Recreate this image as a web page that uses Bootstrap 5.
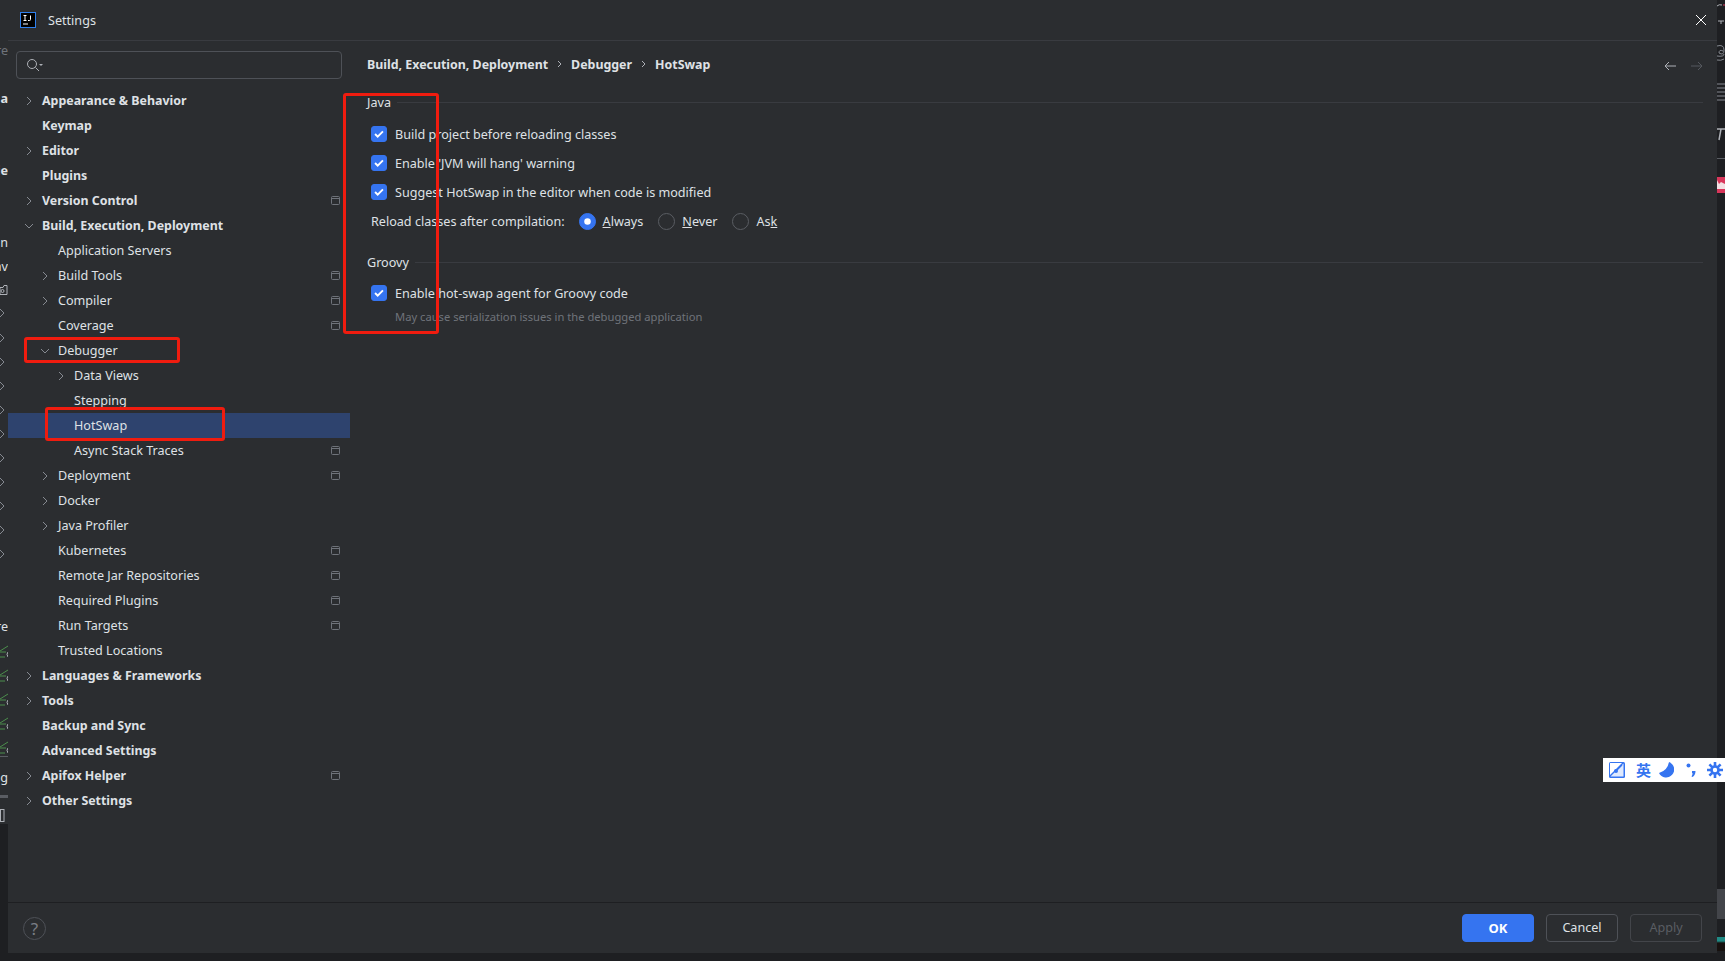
<!DOCTYPE html>
<html lang="en">
<head>
  <meta charset="UTF-8">
  <title>Settings</title>
  <link href="https://cdn.jsdelivr.net/npm/bootstrap@5.3.0/dist/css/bootstrap.min.css" rel="stylesheet">
  <style>
    html, body { height: 100%; }
    body {
      background: #1e1f22;
      color: #dfe1e5;
      font-family: "Noto Sans", "Noto Sans CJK SC", sans-serif;
      font-size: 12.6px;
      line-height: 21px;
      overflow: hidden;
    }
    .page { height: 961px; position: relative; }
    /* window behind the dialog, only its edges show */
    .edge { width: 8px; height: 961px; position: relative; overflow: hidden; flex: none; }
    .edge-left { background: linear-gradient(#2b2d30 0, #2b2d30 824px, #1e1f22 824px); }
    .edge-right { background: #1e1f22; }
    .frag { position: absolute; white-space: nowrap; line-height: 16px; }
    .frag-left { right: 0; }
    .frag-bold { font-weight: 700; }
    .frag-dim { color: #6f737a; }
    .chev-frag { position: absolute; left: 0; }
    .bar-grey { position: absolute; background: #5a5d63; }
    .bar-dark { position: absolute; left: 0; top: 889px; width: 8px; height: 30px; background: #43454a; }
    .bar-teal { position: absolute; left: 0; top: 937px; width: 8px; height: 14px; background: linear-gradient(#1f8a85 0, #1f8a85 4px, #17110f 6px); }

    .dialog { flex: 1 1 auto; height: 953px; background: #2b2d30; min-width: 0; }
    .dlg-head { height: 41px; border-bottom: 1px solid #393b40; padding: 0 10px 0 12px; flex: none; }
    .dlg-logo { width: 16px; height: 16px; margin-right: 12px; }
    .dlg-body { height: 861px; flex: none; }

    .side { width: 342px; flex: none; }
    .search-box { width: 326px; height: 28px; margin: 10px 0 9px 8px; border: 1px solid #4e5157; border-radius: 4px; padding-left: 9px; }
    .tree-row { height: 25px; padding-right: 10px; white-space: nowrap; }
    .tree-lvl0 { padding-left: 16px; }
    .tree-lvl1 { padding-left: 32px; }
    .tree-lvl2 { padding-left: 48px; }
    .tree-bold { font-weight: 700; font-size: 12.4px; }
    .tree-on { background: #2e436e; }
    .tree-arrow { width: 18px; flex: none; padding-left: 2px; display: flex; align-items: center; }
    .tree-open { margin-left: -2px; }
    .tree-pin { margin-left: auto; }

    .pane { padding: 13px 14px 0 17px; }
    .crumbs { height: 20px; font-weight: 700; font-size: 12.4px; }
    .crumb-sep { margin: 0 9px; }
    .nav-arrows { gap: 13px; margin-top: 4px; }
    .sect-title { margin-top: 18px; height: 20px; gap: 6px; }
    .sect-title.sect-next { margin-top: 21px; }
    .sect-line { height: 1px; background: #393b40; }
    .opts { margin-top: 12px; margin-left: 4px; gap: 9px; }
    .opts.opts-near { margin-top: 11px; }
    .opt-row { height: 20px; }
    .opt-box.form-check-input {
      width: 16px; height: 16px; margin: 0; flex: none;
      background-color: #3574f0; border-color: #3574f0; border-radius: 3px;
      background-image: url("data:image/svg+xml,%3csvg xmlns='http://www.w3.org/2000/svg' viewBox='0 0 16 16'%3e%3cpath fill='none' stroke='%23fff' stroke-width='2.200' d='M3.500 8l3 3 6-6'/%3e%3c/svg%3e");
    }
    .opt-radio.form-check-input {
      width: 17px; height: 17px; margin: 0; flex: none;
      background-color: transparent; border: 1px solid #5a5d63;
    }
    .opt-radio.form-check-input:checked {
      background-color: #3574f0; border-color: #3574f0;
      background-size: 13px; background-position: center; background-repeat: no-repeat;
    }
    .reload-label { margin-right: 14px; }
    .radio-item { gap: 7px; margin-right: 15px; }
    .note { margin: 3px 0 0 28px; color: #6f737a; font-size: 11.2px; }

    .dlg-foot { height: 51px; border-top: 1px solid #1e1f22; padding: 11px 15px 0 15px; flex: none; }
    .help-dot { width: 23px; height: 23px; border: 1px solid #4e5157; border-radius: 50%; color: #7a7e85; font-size: 17px; margin-top: 3px; }
    .foot-btns { gap: 12px; }
    .btn.foot-btn {
      width: 72px; height: 28px; padding: 0; font-size: 12.6px; line-height: 26px;
      border-radius: 4px; background: transparent; border: 1px solid #4e5157; color: #dfe1e5;
    }
    .btn.foot-ok { background: #3574f0; border-color: #3574f0; color: #fff; font-weight: 700; font-size: 13px; }
    .btn.foot-off { border-color: #43454a; color: #5a5d63; opacity: 1; }

    /* red annotations drawn over the screenshot */
    .mark-box { position: absolute; border: 3px solid #f01c0f; border-radius: 3px; pointer-events: none; }
    .mark-java { left: 343px; top: 93px; width: 96px; height: 241px; }
    .mark-debugger { left: 24px; top: 337px; width: 156px; height: 26px; }
    .mark-hotswap { left: 45px; top: 407px; width: 180px; height: 34px; }

    /* input method toolbar floating on top */
    .ime-bar { position: absolute; left: 1603px; top: 758px; width: 122px; height: 24px; background: #fff; color: #3574f0; padding-left: 6px; }
    .ime-word { font-family: "Noto Sans CJK SC", sans-serif; font-size: 15px; font-weight: 700; line-height: 24px; margin: 0 8px 0 11px; }
    .ime-dots { margin: 0 11px 0 12px; }
  </style>
</head>
<body>
  <div class="page d-flex">
    <!-- left edge of the IDE behind -->
    <div class="edge edge-left">
      <span class="frag frag-left frag-dim" style="top:43px">re</span>
      <span class="frag frag-left frag-bold" style="top:91px">a</span>
      <span class="frag frag-left frag-bold" style="top:163px">ie</span>
      <span class="frag frag-left" style="top:235px">n</span>
      <span class="frag frag-left" style="top:259px">av</span>
      <svg class="chev-frag" style="top:284px" width="8" height="12" viewBox="0 0 8 12" fill="none" stroke="#aeb1b7"><path d="M0 3.500h3l1-2h3v9h-7z"/><circle cx="2.500" cy="7" r="1.500"/></svg>
      <svg class="chev-frag" style="top:308px" width="5" height="10" viewBox="0 0 5 10" fill="none" stroke="#868a91"><path d="M0 1l4 4-4 4"/></svg>
      <svg class="chev-frag" style="top:333px" width="5" height="10" viewBox="0 0 5 10" fill="none" stroke="#868a91"><path d="M0 1l4 4-4 4"/></svg>
      <svg class="chev-frag" style="top:357px" width="5" height="10" viewBox="0 0 5 10" fill="none" stroke="#868a91"><path d="M0 1l4 4-4 4"/></svg>
      <svg class="chev-frag" style="top:381px" width="5" height="10" viewBox="0 0 5 10" fill="none" stroke="#868a91"><path d="M0 1l4 4-4 4"/></svg>
      <svg class="chev-frag" style="top:405px" width="5" height="10" viewBox="0 0 5 10" fill="none" stroke="#868a91"><path d="M0 1l4 4-4 4"/></svg>
      <svg class="chev-frag" style="top:429px" width="5" height="10" viewBox="0 0 5 10" fill="none" stroke="#868a91"><path d="M0 1l4 4-4 4"/></svg>
      <svg class="chev-frag" style="top:453px" width="5" height="10" viewBox="0 0 5 10" fill="none" stroke="#868a91"><path d="M0 1l4 4-4 4"/></svg>
      <svg class="chev-frag" style="top:477px" width="5" height="10" viewBox="0 0 5 10" fill="none" stroke="#868a91"><path d="M0 1l4 4-4 4"/></svg>
      <svg class="chev-frag" style="top:501px" width="5" height="10" viewBox="0 0 5 10" fill="none" stroke="#868a91"><path d="M0 1l4 4-4 4"/></svg>
      <svg class="chev-frag" style="top:525px" width="5" height="10" viewBox="0 0 5 10" fill="none" stroke="#868a91"><path d="M0 1l4 4-4 4"/></svg>
      <svg class="chev-frag" style="top:549px" width="5" height="10" viewBox="0 0 5 10" fill="none" stroke="#868a91"><path d="M0 1l4 4-4 4"/></svg>
      <span class="frag frag-left" style="top:619px">re</span>
      <svg class="chev-frag" style="top:645px" width="8" height="14" viewBox="0 0 8 14" fill="none" stroke="#4c8f4c"><path d="M0 6L8 1M0 7h6M0 12h5"/><path d="M8 7q-2 2 0 5" stroke="#aeb1b7"/></svg>
      <svg class="chev-frag" style="top:669px" width="8" height="14" viewBox="0 0 8 14" fill="none" stroke="#4c8f4c"><path d="M0 6L8 1M0 7h6M0 12h5"/><path d="M8 7q-2 2 0 5" stroke="#aeb1b7"/></svg>
      <svg class="chev-frag" style="top:693px" width="8" height="14" viewBox="0 0 8 14" fill="none" stroke="#4c8f4c"><path d="M0 6L8 1M0 7h6M0 12h5"/><path d="M8 7q-2 2 0 5" stroke="#aeb1b7"/></svg>
      <svg class="chev-frag" style="top:717px" width="8" height="14" viewBox="0 0 8 14" fill="none" stroke="#4c8f4c"><path d="M0 6L8 1M0 7h6M0 12h5"/><path d="M8 7q-2 2 0 5" stroke="#aeb1b7"/></svg>
      <svg class="chev-frag" style="top:741px" width="8" height="14" viewBox="0 0 8 14" fill="none" stroke="#4c8f4c"><path d="M0 6L8 1M0 7h6M0 12h5"/><path d="M8 7q-2 2 0 5" stroke="#aeb1b7"/></svg>
      <div class="bar-grey" style="left:0;top:756px;width:8px;height:1px"></div>
      <span class="frag frag-left" style="top:770px">ng</span>
      <div class="bar-grey" style="left:0;top:795px;width:8px;height:3px"></div>
      <svg class="chev-frag" style="top:809px" width="5" height="13" viewBox="0 0 5 13" fill="none" stroke="#aeb1b7"><rect x="0.500" y="0.500" width="3.500" height="12"/></svg>
    </div>

    <div class="dialog d-flex flex-column">
      <header class="dlg-head d-flex align-items-center">
        <svg class="dlg-logo" viewBox="0 0 16 16">
          <rect x="0.500" y="0.500" width="15" height="15" fill="#000" stroke="#2f80ed"/>
          <path d="M3.500 3.500h3M5 3.500v5M3.500 8.500h3M8 8.500h1.500q1 0 1-1V3.500" fill="none" stroke="#fff"/>
          <path d="M3 12h5" stroke="#fff"/>
        </svg>
        <span>Settings</span>
        <svg class="ms-auto" width="12" height="12" viewBox="0 0 12 12" stroke="#fff" fill="none"><path d="M1 1l10 10M11 1L1 11"/></svg>
      </header>

      <div class="dlg-body d-flex">
        <nav class="side">
          <div class="search-box d-flex align-items-center">
            <svg width="18" height="14" viewBox="0 0 18 14" fill="none" stroke="#aeb1b7"><circle cx="6" cy="6" r="4.500"/><path d="M9.500 9.500l3.500 3.500"/><path d="M13 6h4l-2 2z" fill="#aeb1b7" stroke="none"/></svg>
          </div>

          <div class="tree-row tree-lvl0 tree-bold d-flex align-items-center"><span class="tree-arrow"><svg width="6" height="10" viewBox="0 0 6 10" fill="none" stroke="#868a91"><path d="M1 1l4 4-4 4"/></svg></span><span>Appearance &amp; Behavior</span></div>
          <div class="tree-row tree-lvl0 tree-bold d-flex align-items-center"><span class="tree-arrow"></span><span>Keymap</span></div>
          <div class="tree-row tree-lvl0 tree-bold d-flex align-items-center"><span class="tree-arrow"><svg width="6" height="10" viewBox="0 0 6 10" fill="none" stroke="#868a91"><path d="M1 1l4 4-4 4"/></svg></span><span>Editor</span></div>
          <div class="tree-row tree-lvl0 tree-bold d-flex align-items-center"><span class="tree-arrow"></span><span>Plugins</span></div>
          <div class="tree-row tree-lvl0 tree-bold d-flex align-items-center"><span class="tree-arrow"><svg width="6" height="10" viewBox="0 0 6 10" fill="none" stroke="#868a91"><path d="M1 1l4 4-4 4"/></svg></span><span>Version Control</span><svg class="tree-pin" width="9" height="9" viewBox="0 0 9 9" fill="none" stroke="#6f737a"><rect x="0.500" y="0.500" width="8" height="8" rx="1"/><path d="M0.500 2.500h8"/></svg></div>
          <div class="tree-row tree-lvl0 tree-bold d-flex align-items-center"><span class="tree-arrow"><svg class="tree-open" width="10" height="6" viewBox="0 0 10 6" fill="none" stroke="#868a91"><path d="M1 1l4 4 4-4"/></svg></span><span>Build, Execution, Deployment</span></div>
          <div class="tree-row tree-lvl1 d-flex align-items-center"><span class="tree-arrow"></span><span>Application Servers</span></div>
          <div class="tree-row tree-lvl1 d-flex align-items-center"><span class="tree-arrow"><svg width="6" height="10" viewBox="0 0 6 10" fill="none" stroke="#868a91"><path d="M1 1l4 4-4 4"/></svg></span><span>Build Tools</span><svg class="tree-pin" width="9" height="9" viewBox="0 0 9 9" fill="none" stroke="#6f737a"><rect x="0.500" y="0.500" width="8" height="8" rx="1"/><path d="M0.500 2.500h8"/></svg></div>
          <div class="tree-row tree-lvl1 d-flex align-items-center"><span class="tree-arrow"><svg width="6" height="10" viewBox="0 0 6 10" fill="none" stroke="#868a91"><path d="M1 1l4 4-4 4"/></svg></span><span>Compiler</span><svg class="tree-pin" width="9" height="9" viewBox="0 0 9 9" fill="none" stroke="#6f737a"><rect x="0.500" y="0.500" width="8" height="8" rx="1"/><path d="M0.500 2.500h8"/></svg></div>
          <div class="tree-row tree-lvl1 d-flex align-items-center"><span class="tree-arrow"></span><span>Coverage</span><svg class="tree-pin" width="9" height="9" viewBox="0 0 9 9" fill="none" stroke="#6f737a"><rect x="0.500" y="0.500" width="8" height="8" rx="1"/><path d="M0.500 2.500h8"/></svg></div>
          <div class="tree-row tree-lvl1 d-flex align-items-center"><span class="tree-arrow"><svg class="tree-open" width="10" height="6" viewBox="0 0 10 6" fill="none" stroke="#868a91"><path d="M1 1l4 4 4-4"/></svg></span><span>Debugger</span></div>
          <div class="tree-row tree-lvl2 d-flex align-items-center"><span class="tree-arrow"><svg width="6" height="10" viewBox="0 0 6 10" fill="none" stroke="#868a91"><path d="M1 1l4 4-4 4"/></svg></span><span>Data Views</span></div>
          <div class="tree-row tree-lvl2 d-flex align-items-center"><span class="tree-arrow"></span><span>Stepping</span></div>
          <div class="tree-row tree-lvl2 tree-on d-flex align-items-center"><span class="tree-arrow"></span><span>HotSwap</span></div>
          <div class="tree-row tree-lvl2 d-flex align-items-center"><span class="tree-arrow"></span><span>Async Stack Traces</span><svg class="tree-pin" width="9" height="9" viewBox="0 0 9 9" fill="none" stroke="#6f737a"><rect x="0.500" y="0.500" width="8" height="8" rx="1"/><path d="M0.500 2.500h8"/></svg></div>
          <div class="tree-row tree-lvl1 d-flex align-items-center"><span class="tree-arrow"><svg width="6" height="10" viewBox="0 0 6 10" fill="none" stroke="#868a91"><path d="M1 1l4 4-4 4"/></svg></span><span>Deployment</span><svg class="tree-pin" width="9" height="9" viewBox="0 0 9 9" fill="none" stroke="#6f737a"><rect x="0.500" y="0.500" width="8" height="8" rx="1"/><path d="M0.500 2.500h8"/></svg></div>
          <div class="tree-row tree-lvl1 d-flex align-items-center"><span class="tree-arrow"><svg width="6" height="10" viewBox="0 0 6 10" fill="none" stroke="#868a91"><path d="M1 1l4 4-4 4"/></svg></span><span>Docker</span></div>
          <div class="tree-row tree-lvl1 d-flex align-items-center"><span class="tree-arrow"><svg width="6" height="10" viewBox="0 0 6 10" fill="none" stroke="#868a91"><path d="M1 1l4 4-4 4"/></svg></span><span>Java Profiler</span></div>
          <div class="tree-row tree-lvl1 d-flex align-items-center"><span class="tree-arrow"></span><span>Kubernetes</span><svg class="tree-pin" width="9" height="9" viewBox="0 0 9 9" fill="none" stroke="#6f737a"><rect x="0.500" y="0.500" width="8" height="8" rx="1"/><path d="M0.500 2.500h8"/></svg></div>
          <div class="tree-row tree-lvl1 d-flex align-items-center"><span class="tree-arrow"></span><span>Remote Jar Repositories</span><svg class="tree-pin" width="9" height="9" viewBox="0 0 9 9" fill="none" stroke="#6f737a"><rect x="0.500" y="0.500" width="8" height="8" rx="1"/><path d="M0.500 2.500h8"/></svg></div>
          <div class="tree-row tree-lvl1 d-flex align-items-center"><span class="tree-arrow"></span><span>Required Plugins</span><svg class="tree-pin" width="9" height="9" viewBox="0 0 9 9" fill="none" stroke="#6f737a"><rect x="0.500" y="0.500" width="8" height="8" rx="1"/><path d="M0.500 2.500h8"/></svg></div>
          <div class="tree-row tree-lvl1 d-flex align-items-center"><span class="tree-arrow"></span><span>Run Targets</span><svg class="tree-pin" width="9" height="9" viewBox="0 0 9 9" fill="none" stroke="#6f737a"><rect x="0.500" y="0.500" width="8" height="8" rx="1"/><path d="M0.500 2.500h8"/></svg></div>
          <div class="tree-row tree-lvl1 d-flex align-items-center"><span class="tree-arrow"></span><span>Trusted Locations</span></div>
          <div class="tree-row tree-lvl0 tree-bold d-flex align-items-center"><span class="tree-arrow"><svg width="6" height="10" viewBox="0 0 6 10" fill="none" stroke="#868a91"><path d="M1 1l4 4-4 4"/></svg></span><span>Languages &amp; Frameworks</span></div>
          <div class="tree-row tree-lvl0 tree-bold d-flex align-items-center"><span class="tree-arrow"><svg width="6" height="10" viewBox="0 0 6 10" fill="none" stroke="#868a91"><path d="M1 1l4 4-4 4"/></svg></span><span>Tools</span></div>
          <div class="tree-row tree-lvl0 tree-bold d-flex align-items-center"><span class="tree-arrow"></span><span>Backup and Sync</span></div>
          <div class="tree-row tree-lvl0 tree-bold d-flex align-items-center"><span class="tree-arrow"></span><span>Advanced Settings</span></div>
          <div class="tree-row tree-lvl0 tree-bold d-flex align-items-center"><span class="tree-arrow"><svg width="6" height="10" viewBox="0 0 6 10" fill="none" stroke="#868a91"><path d="M1 1l4 4-4 4"/></svg></span><span>Apifox Helper</span><svg class="tree-pin" width="9" height="9" viewBox="0 0 9 9" fill="none" stroke="#6f737a"><rect x="0.500" y="0.500" width="8" height="8" rx="1"/><path d="M0.500 2.500h8"/></svg></div>
          <div class="tree-row tree-lvl0 tree-bold d-flex align-items-center"><span class="tree-arrow"><svg width="6" height="10" viewBox="0 0 6 10" fill="none" stroke="#868a91"><path d="M1 1l4 4-4 4"/></svg></span><span>Other Settings</span></div>
        </nav>

        <main class="pane flex-grow-1">
          <div class="crumbs d-flex align-items-center">
            <span>Build, Execution, Deployment</span>
            <svg class="crumb-sep" width="5" height="8" viewBox="0 0 5 8" fill="none" stroke="#aeb1b7"><path d="M1 1l3 3-3 3"/></svg>
            <span>Debugger</span>
            <svg class="crumb-sep" width="5" height="8" viewBox="0 0 5 8" fill="none" stroke="#aeb1b7"><path d="M1 1l3 3-3 3"/></svg>
            <span>HotSwap</span>
            <div class="nav-arrows ms-auto d-flex">
              <svg width="13" height="10" viewBox="0 0 13 10" fill="none" stroke="#aeb1b7"><path d="M12 5H1M5 1L1 5l4 4"/></svg>
              <svg width="13" height="10" viewBox="0 0 13 10" fill="none" stroke="#55585e"><path d="M1 5h11M8 1l4 4-4 4"/></svg>
            </div>
          </div>

          <div class="sect-title d-flex align-items-center">
            <span>Java</span>
            <div class="sect-line flex-grow-1"></div>
          </div>
          <div class="opts d-flex flex-column">
            <label class="opt-row d-flex align-items-center gap-2"><input class="opt-box form-check-input" type="checkbox" checked>Build project before reloading classes</label>
            <label class="opt-row d-flex align-items-center gap-2"><input class="opt-box form-check-input" type="checkbox" checked>Enable 'JVM will hang' warning</label>
            <label class="opt-row d-flex align-items-center gap-2"><input class="opt-box form-check-input" type="checkbox" checked>Suggest HotSwap in the editor when code is modified</label>
            <div class="opt-row d-flex align-items-center">
              <span class="reload-label">Reload classes after compilation:</span>
              <label class="radio-item d-flex align-items-center"><input class="opt-radio form-check-input" type="radio" name="reload" checked><span><u>A</u>lways</span></label>
              <label class="radio-item d-flex align-items-center"><input class="opt-radio form-check-input" type="radio" name="reload"><span><u>N</u>ever</span></label>
              <label class="radio-item d-flex align-items-center"><input class="opt-radio form-check-input" type="radio" name="reload"><span>As<u>k</u></span></label>
            </div>
          </div>

          <div class="sect-title sect-next d-flex align-items-center">
            <span>Groovy</span>
            <div class="sect-line flex-grow-1"></div>
          </div>
          <div class="opts opts-near d-flex flex-column">
            <label class="opt-row d-flex align-items-center gap-2"><input class="opt-box form-check-input" type="checkbox" checked>Enable hot-swap agent for Groovy code</label>
          </div>
          <div class="note">May cause serialization issues in the debugged application</div>
        </main>
      </div>

      <footer class="dlg-foot d-flex justify-content-between align-items-start">
        <div class="help-dot d-flex align-items-center justify-content-center">?</div>
        <div class="foot-btns d-flex">
          <button type="button" class="btn foot-btn foot-ok">OK</button>
          <button type="button" class="btn foot-btn">Cancel</button>
          <button type="button" class="btn foot-btn foot-off" disabled>Apply</button>
        </div>
      </footer>
    </div>

    <!-- right edge of the IDE behind -->
    <div class="edge edge-right">
      <svg class="chev-frag" style="top:2px" width="8" height="22" viewBox="0 0 8 22" fill="none" stroke="#aeb1b7"><path d="M0 4q2-2 5-1"/><path d="M1 19h6M4 19v3"/><path d="M6 3h2" stroke="#d8365a"/></svg>
      <svg class="chev-frag" style="top:44px" width="8" height="18" viewBox="0 0 8 18" fill="none" stroke="#868a91"><path d="M0 2q7-2 7 4t-5 3q0-4 4-2M0 12q7 1 7-2M0 16q4 1 7-1"/></svg>
      <svg class="chev-frag" style="top:83px" width="8" height="19" viewBox="0 0 8 19" fill="none" stroke="#868a91"><path d="M0 1h8M0 5h8M0 9h8M0 13h8M0 17h8"/></svg>
      <svg class="chev-frag" style="top:127px" width="8" height="14" viewBox="0 0 8 14" fill="none" stroke="#aeb1b7" stroke-width="1.500"><path d="M0 2h8M4 2L2 13"/></svg>
      <div class="bar-grey" style="left:0;top:158px;width:8px;height:1px"></div>
      <svg class="chev-frag" style="top:177px" width="8" height="16" viewBox="0 0 8 16"><rect width="8" height="16" fill="#d8365a"/><path d="M0 3l2 4 2-2 4 2v5H0z" fill="#f3dfe2"/></svg>
      <div class="bar-dark"></div>
      <div class="bar-teal"></div>
    </div>

    <!-- annotations -->
    <div class="mark-box mark-java"></div>
    <div class="mark-box mark-debugger"></div>
    <div class="mark-box mark-hotswap"></div>

    <div class="ime-bar d-flex align-items-center">
      <svg width="16" height="16" viewBox="0 0 16 16"><rect width="16" height="16" rx="1.500" fill="#3574f0"/><path d="M1.500 14.500L14.500 1.500v13z" fill="#dfe9fd"/><path d="M1 1h12L1 13z" fill="#fff"/><path d="M13 3L7 9" stroke="#3574f0" stroke-width="1.200"/><circle cx="7" cy="9" r="2" fill="#3574f0"/></svg>
      <span class="ime-word">英</span>
      <svg width="15" height="16" viewBox="0 0 15 16"><path d="M10 0A8 8 0 1 1 0 11 14 14 0 0 0 10 0z" fill="#3574f0"/></svg>
      <svg class="ime-dots" width="10" height="15" viewBox="0 0 10 15" fill="#3574f0"><circle cx="2.500" cy="2.500" r="2"/><path d="M6 8h3.500q0 4-3 6l-1-.5q1.200-2 1-3.500h-.5z"/></svg>
      <svg width="16" height="16" viewBox="0 0 16 16" fill="none" stroke="#3574f0"><circle cx="8" cy="8" r="3.500" stroke-width="2.600"/><path d="M8 0v4M8 12v4M0 8h4M12 8h4M2.400 2.400l2.800 2.800M10.800 10.800l2.800 2.800M2.400 13.600l2.800-2.800M10.800 5.200l2.800-2.800" stroke-width="2.600"/></svg>
    </div>
  </div>
</body>
</html>
